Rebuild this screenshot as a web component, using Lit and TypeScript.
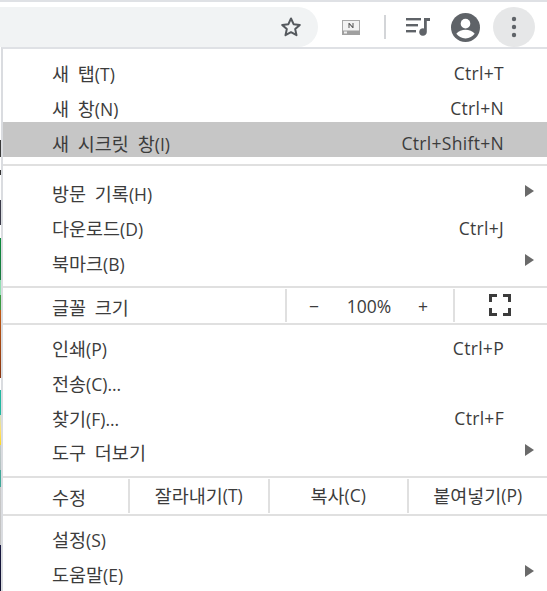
import { LitElement, html, css } from "lit";
import { customElement } from "lit/decorators.js";

type Item = { label: string; accel?: string; arrow?: boolean; active?: boolean };

const groupA: Item[] = [
  { label: "새 탭(T)", accel: "Ctrl+T" },
  { label: "새 창(N)", accel: "Ctrl+N" },
  { label: "새 시크릿 창(I)", accel: "Ctrl+Shift+N", active: true },
];
const groupB: Item[] = [
  { label: "방문 기록(H)", arrow: true },
  { label: "다운로드(D)", accel: "Ctrl+J" },
  { label: "북마크(B)", arrow: true },
];
const groupC: Item[] = [
  { label: "인쇄(P)", accel: "Ctrl+P" },
  { label: "전송(C)..." },
  { label: "찾기(F)...", accel: "Ctrl+F" },
  { label: "도구 더보기", arrow: true },
];
const groupD: Item[] = [
  { label: "설정(S)" },
  { label: "도움말(E)", arrow: true },
];

/* Hangul runs are set a little larger than the Latin mnemonic that follows them. */
function txt(s: string) {
  const i = s.indexOf("(");
  if (i < 0) return html`<span class="ko">${s}</span>`;
  return html`<span class="ko">${s.slice(0, i)}</span>${s.slice(i)}`;
}

@customElement("app-root")
export class AppRoot extends LitElement {
  static styles = css`
    :host {
      display: block;
      width: 547px;
      height: 591px;
      overflow: hidden;
      background: #fff;
      font-family: "Open Sans", "Noto Sans CJK KR", sans-serif;
      font-size: 17.500px;
      color: #3c3c3c;
    }
    .ko { font-size: 18.500px; word-spacing: 4px; }
    .toolbar {
      height: 47px;
      box-sizing: border-box;
      border-top: 2px solid #dfe1e5;
      padding-top: 5px;
      display: flex;
      align-items: stretch;
      background: #fff;
    }
    .omni {
      width: 318px;
      background: #f1f3f4;
      border-radius: 0 20px 20px 0;
      display: flex;
      align-items: center;
      justify-content: flex-end;
      padding-right: 15px;
      box-sizing: border-box;
      flex: none;
    }
    .tools {
      flex: 1;
      display: flex;
      align-items: center;
      min-width: 0;
    }
    .ext { margin-left: 24px; }
    .divider {
      width: 2px;
      height: 24px;
      background: #d3d5d8;
      margin-left: 24px;
    }
    .media { margin-left: 20px; }
    .avatar { margin-left: 21px; }
    .more {
      margin-left: 13px;
      width: 42px;
      height: 40px;
      border-radius: 50%;
      background: #e6e7e8;
      display: flex;
      align-items: center;
      justify-content: center;
    }
    svg { display: block; }
    .body {
      display: flex;
      height: 544px;
    }
    .page {
      width: 1px;
      flex: none;
      background: linear-gradient(
        to bottom,
        #ffffff 0, #ffffff 93px, #3a3a3a 93px, #3a3a3a 110px, #ffffff 110px, #ffffff 123px,
        #333 123px, #333 128px, #fff 128px, #fff 153px, #3a3a48 153px, #3a3a48 178px,
        #ffffff 178px, #ffffff 191px, #0a8a3a 191px, #1a7a40 233px, #8fe0b0 233px, #8fe0b0 248px,
        #3a9a40 248px, #3a9a40 263px, #c05a14 263px, #8a3510 331px, #ffffff 331px, #ffffff 343px,
        #20b8a0 343px, #20b8a0 368px, #cfe0c8 368px, #ffe070 383px, #ffd820 398px, #c0c8c8 398px,
        #b0c0c0 423px, #40a898 423px, #40a898 440px, #c8c8c8 440px, #c0c0c0 498px, #181840 498px, #101030 544px
      );
    }
    .menu {
      flex: 1;
      min-width: 0;
      border-left: 2px solid #dadce0;
      border-top: 2px solid #dfe1e5;
      background: #fff;
      padding-top: 3px;
      box-sizing: border-box;
    }
    .row {
      height: 34.700px;
      display: flex;
      align-items: center;
      padding: 0 43px 0 49px;
      position: relative;
      white-space: nowrap;
    }
    .first .row { height: 35px; }
    .row.active { background: #c6c6c6; }
    .label { flex: 1; padding-top: 6px; }
    .accel { padding-top: 6px; letter-spacing: 0.300px; }
    .arrow {
      position: absolute;
      right: 13px;
      top: 11.500px;
      width: 0;
      height: 0;
      border-left: 9px solid #6a6a6a;
      border-top: 6px solid transparent;
      border-bottom: 6px solid transparent;
    }
    .sep { height: 2px; background: #e0e0e0; }
    .gap-7 { height: 7px; }
    .gap-3 { height: 3px; }
    .gap-9 { height: 9px; }
    .zoom, .edit { display: flex; align-items: stretch; }
    .zoom { height: 35px; }
    .edit { height: 36px; }
    .cell { display: flex; align-items: center; justify-content: center; box-sizing: border-box; border-left: 2px solid #e0e0e0; margin: 1px 0; white-space: nowrap; }
    .title { padding-left: 49px; display: flex; align-items: center; box-sizing: border-box; white-space: nowrap; }
    .zoom .title { width: 282px; padding-top: 2px; }
    .edit .title { width: 125px; padding-top: 3px; }
    .zoomctl { width: 168px; justify-content: flex-start; }
    .zoomctl span { text-align: center; }
    .z-minus { width: 54px; }
    .z-val { width: 56px; }
    .z-plus { width: 52px; }
    .full { width: 92px; padding-bottom: 2px; }
    .ecell { width: 139.500px; padding-bottom: 2px; }
  `;

  private rows(items: Item[]) {
    return items.map(
      (i) => html`<div class="row ${i.active ? "active" : ""}">
        <span class="label">${txt(i.label)}</span>
        ${i.accel ? html`<span class="accel">${i.accel}</span>` : ""}
        ${i.arrow ? html`<span class="arrow"></span>` : ""}
      </div>`
    );
  }

  render() {
    return html`
      <div class="toolbar">
        <div class="omni">
          <svg width="24" height="24" viewBox="0 0 24 24" fill="none" stroke="#55595e" stroke-width="2" stroke-linejoin="round">
            <path d="M12 3.500l2.600 5.700 6.200.7-4.600 4.200 1.300 6.100L12 17.200l-5.500 3 1.300-6.100-4.600-4.200 6.200-.7z" />
          </svg>
        </div>
        <div class="tools">
          <svg class="ext" width="18" height="15" viewBox="0 0 18 15">
            <rect x=".5" y=".5" width="17" height="14" fill="#f2f2f2" stroke="#a8a8a8" />
            <rect x="0" y="10.500" width="18" height="4.500" fill="#a0a0a0" />
            <rect x="2" y="11.500" width="3" height="2" fill="#eee" />
            <path d="M6.500 8V3h1l3 3.400V3h1v5h-1L7.500 4.600V8z" fill="#555" />
          </svg>
          <div class="divider"></div>
          <svg class="media" width="24" height="24" viewBox="0 -2 24 24" fill="#5f6368">
            <rect x="0" y="1" width="15" height="2.400" />
            <rect x="0" y="7" width="12" height="2.400" />
            <rect x="0" y="13" width="10" height="2.400" />
            <path d="M18 1h6v3h-3.200v11a3.800 3.800 0 1 1-2.800-3.600z" />
          </svg>
          <svg class="avatar" width="29" height="29" viewBox="0 0 30 30">
            <circle cx="15" cy="15" r="15" fill="#5f6368" />
            <circle cx="15" cy="11" r="5" fill="#fff" />
            <path d="M5.500 21.500c2-3 6-4.200 9.500-4.200s7.500 1.200 9.500 4.200c-2 2.800-5.500 4.800-9.500 4.800s-7.500-2-9.500-4.800z" fill="#fff" />
          </svg>
          <div class="more">
            <svg width="6" height="22" viewBox="0 0 6 22" fill="#5f6368">
              <circle cx="3" cy="3" r="2.200" /><circle cx="3" cy="11" r="2.200" /><circle cx="3" cy="19" r="2.200" />
            </svg>
          </div>
        </div>
      </div>
      <div class="body">
        <div class="page"></div>
        <div class="menu">
          <div class="first">${this.rows(groupA)}</div>
          <div class="gap-7"></div>
          <div class="sep"></div>
          <div class="gap-7"></div>
          ${this.rows(groupB)}
          <div class="gap-9"></div>
          <div class="sep"></div>
          <div class="zoom">
            <div class="title">${txt("글꼴 크기")}</div>
            <div class="cell zoomctl"><span class="z-minus">−</span><span class="z-val">100%</span><span class="z-plus">+</span></div>
            <div class="cell full">
              <svg width="22" height="22" viewBox="0 0 22 22" fill="none" stroke="#3c3c3c" stroke-width="3">
                <path d="M1.500 8V1.500H8M14 1.500h6.500V8M20.500 14v6.500H14M8 20.500H1.500V14" />
              </svg>
            </div>
          </div>
          <div class="sep"></div>
          <div class="gap-3"></div>
          ${this.rows(groupC)}
          <div class="gap-9"></div>
          <div class="sep"></div>
          <div class="edit">
            <div class="title">${txt("수정")}</div>
            <div class="cell ecell">${txt("잘라내기(T)")}</div>
            <div class="cell ecell">${txt("복사(C)")}</div>
            <div class="cell ecell">${txt("붙여넣기(P)")}</div>
          </div>
          <div class="sep"></div>
          <div class="gap-3"></div>
          ${this.rows(groupD)}
        </div>
      </div>
    `;
  }
}
